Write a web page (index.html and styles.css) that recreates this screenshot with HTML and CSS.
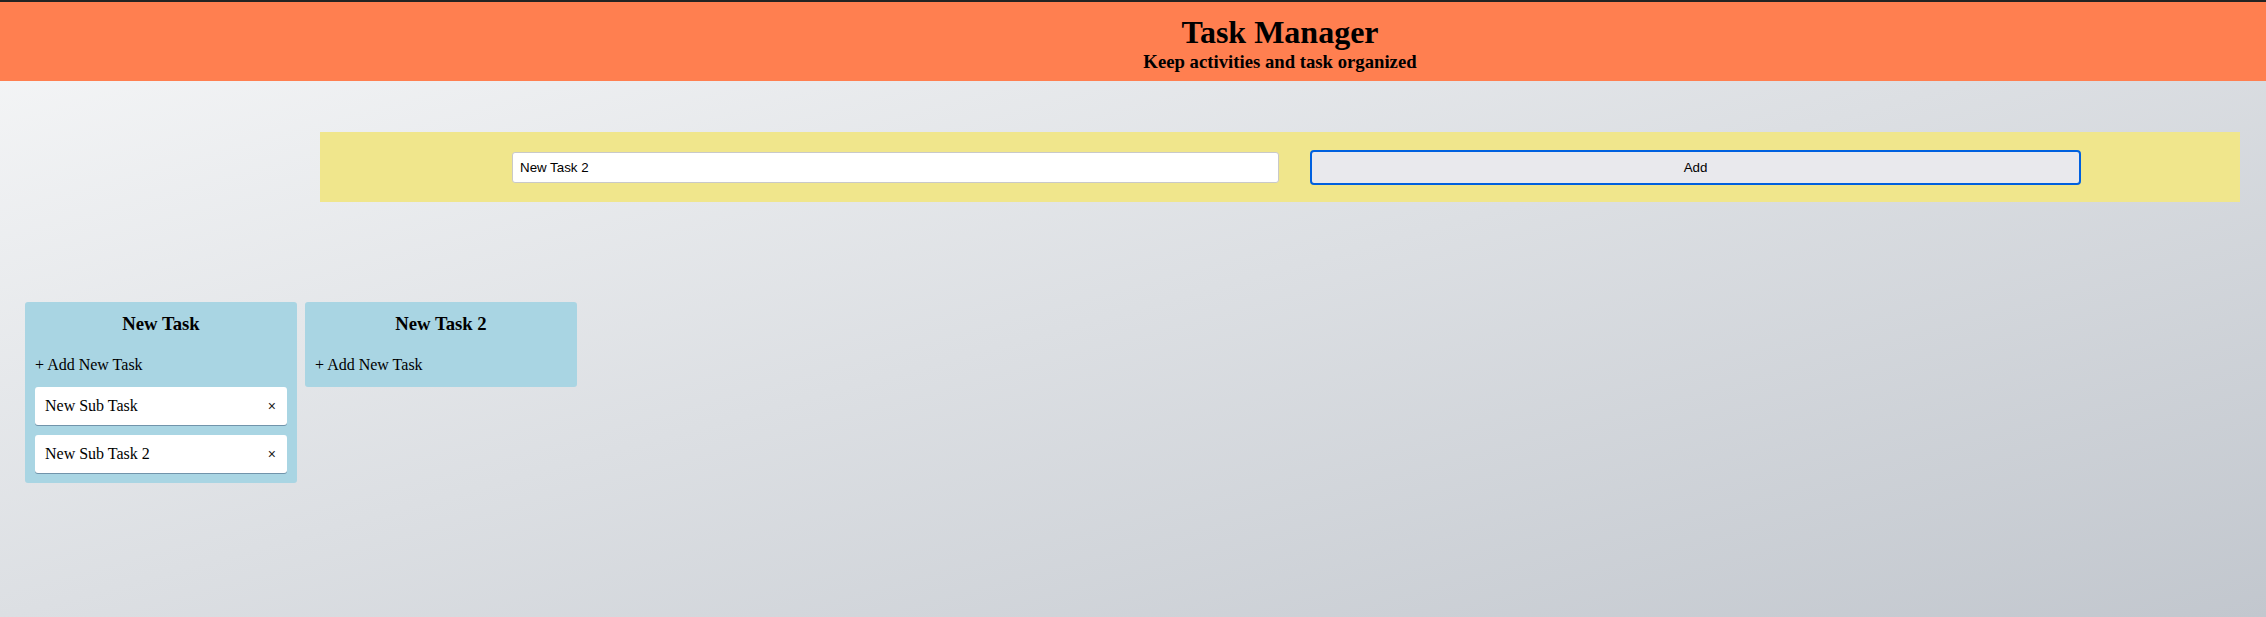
FILE: index.html
```html
<!DOCTYPE html>
<html lang="en">
<head>
<meta charset="utf-8">
<title>Task Manager</title>
<link rel="stylesheet" href="styles.css">
</head>
<body>
  <header class="app-header">
    <h1 class="app-title">Task Manager</h1>
    <h3 class="app-subtitle">Keep activities and task organized</h3>
  </header>

  <form class="new-list-bar">
    <input class="new-list-input" type="text" value="New Task 2">
    <button class="new-list-button" type="button">Add</button>
  </form>

  <main class="board">
    <section class="list">
      <h3 class="list-title">New Task</h3>
      <div class="list-add">+ Add New Task</div>
      <div class="card">
        <span class="card-text">New Sub Task</span>
        <button class="card-remove" type="button">×</button>
      </div>
      <div class="card">
        <span class="card-text">New Sub Task 2</span>
        <button class="card-remove" type="button">×</button>
      </div>
    </section>
    <section class="list">
      <h3 class="list-title">New Task 2</h3>
      <div class="list-add">+ Add New Task</div>
    </section>
  </main>
</body>
</html>
```

FILE: styles.css
```css
html, body {
  margin: 0;
  padding: 0;
}

body {
  min-height: 100vh;
  font-family: "Liberation Serif", "Times New Roman", serif;
  font-size: 16px;
  color: #000;
  background: linear-gradient(to bottom right, #f6f7f8 0%, #c2c7ce 100%);
  background-attachment: fixed;
}

.app-header {
  border-top: 2px solid #232323;
  background: #ff7f50;
  padding: 12px 26px 8px 320px;
  text-align: center;
}

.app-title {
  margin: 0;
  font-size: 32px;
  font-weight: bold;
}

.app-subtitle {
  margin: 0;
  font-size: 18.72px;
  font-weight: bold;
}

.new-list-bar {
  display: flex;
  align-items: center;
  height: 70px;
  margin: 51px 26px 0 320px;
  padding-left: 192px;
  background: #f0e68c;
}

.new-list-input {
  box-sizing: border-box;
  width: 767px;
  height: 31px;
  margin: 0;
  padding: 0 7px;
  border: 1px solid #c9c9c9;
  border-radius: 3px;
  background: #fff;
  font-family: "Liberation Sans", Arial, sans-serif;
  font-size: 13.33px;
  color: #000;
}

.new-list-button {
  box-sizing: border-box;
  width: 771px;
  height: 35px;
  margin: 0 0 0 31px;
  padding: 0;
  border: 2px solid #0060df;
  border-radius: 4px;
  background: #e9e9ed;
  font-family: "Liberation Sans", Arial, sans-serif;
  font-size: 13.33px;
  color: #000;
}

.board {
  display: flex;
  align-items: flex-start;
  gap: 8px;
  margin-top: 100px;
  padding-left: 25px;
}

.list {
  box-sizing: border-box;
  width: 272px;
  padding: 10px;
  border-radius: 3px;
  background: #a9d5e3;
  display: flex;
  flex-direction: column;
  gap: 10px;
}

.list-title {
  margin: 1px 0 7px;
  font-size: 18.72px;
  font-weight: bold;
  text-align: center;
}

.list-add {
  line-height: 25px;
}

.card {
  display: flex;
  align-items: center;
  justify-content: space-between;
  padding: 10px;
  border-radius: 3px;
  background: #fff;
  box-shadow: 0 1px 0 rgba(9, 30, 66, 0.35);
}

.card-remove {
  margin: 0;
  padding: 0 1px 0 0;
  border: 0;
  background: none;
  font-family: "Liberation Sans", Arial, sans-serif;
  font-size: 14px;
  color: #222;
  line-height: 1;
}
```
